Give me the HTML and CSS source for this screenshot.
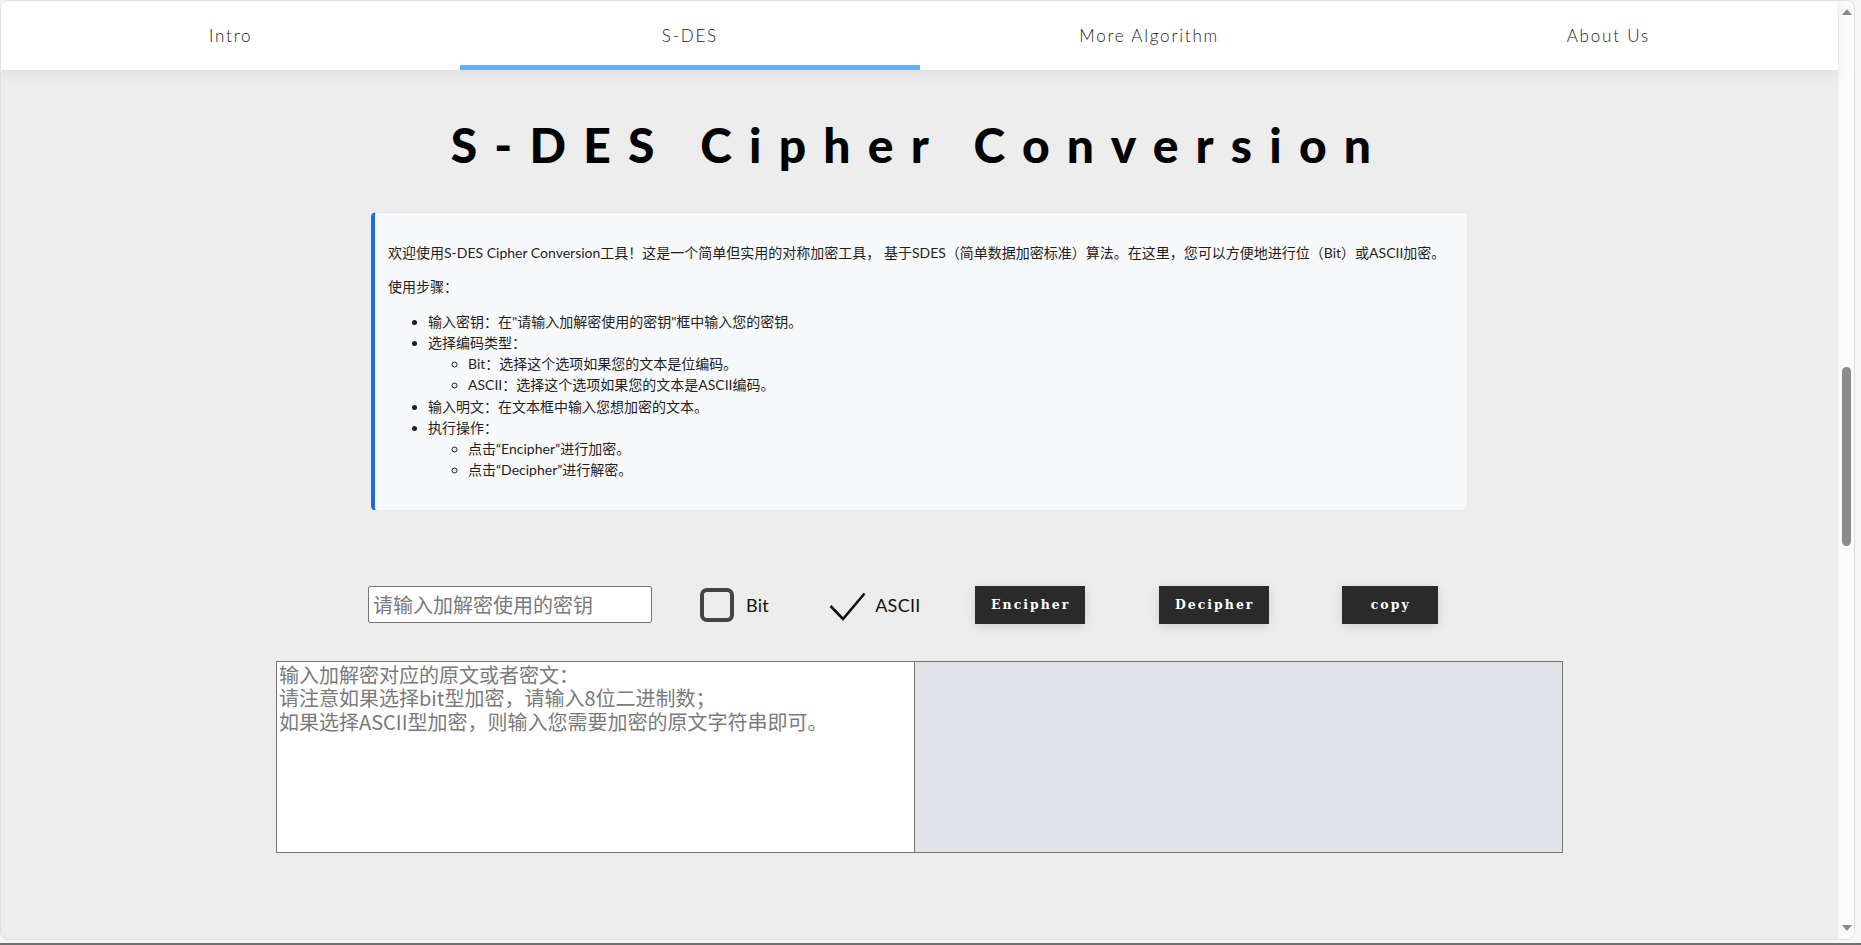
FILE: index.html
```html
<!DOCTYPE html>
<html lang="zh-CN">
<head>
<meta charset="utf-8">
<title>S-DES Cipher Conversion</title>
<link rel="stylesheet" href="styles.css">
</head>
<body>
<div class="window">
  <div class="page">
    <nav class="nav">
      <a class="tab">Intro</a>
      <a class="tab active">S-DES</a>
      <a class="tab">More Algorithm</a>
      <a class="tab">About Us</a>
    </nav>
    <main class="main">
      <h1 class="title">S-DES Cipher Conversion</h1>
      <section class="intro">
        <p>欢迎使用S-DES Cipher Conversion工具！这是一个简单但实用的对称加密工具， 基于SDES（简单数据加密标准）算法。在这里，您可以方便地进行位（Bit）或ASCII加密。</p>
        <p>使用步骤：</p>
        <ul>
          <li>输入密钥：在"请输入加解密使用的密钥"框中输入您的密钥。</li>
          <li>选择编码类型：
            <ul>
              <li>Bit：选择这个选项如果您的文本是位编码。</li>
              <li>ASCII：选择这个选项如果您的文本是ASCII编码。</li>
            </ul>
          </li>
          <li>输入明文：在文本框中输入您想加密的文本。</li>
          <li>执行操作：
            <ul>
              <li>点击“Encipher”进行加密。</li>
              <li>点击“Decipher”进行解密。</li>
            </ul>
          </li>
        </ul>
      </section>
      <div class="controls">
        <input class="key" type="text" placeholder="请输入加解密使用的密钥">
        <span class="box"></span>
        <span class="label bit-label">Bit</span>
        <svg class="check" width="37" height="29" viewBox="0 0 37 29"><path d="M1.5 14 L14 27 L35.5 1.5" fill="none" stroke="#111" stroke-width="2.6"/></svg>
        <span class="label ascii-label">ASCII</span>
        <button class="btn enc">Encipher</button>
        <button class="btn dec">Decipher</button>
        <button class="btn copy">copy</button>
      </div>
      <div class="texts">
        <textarea class="plain" placeholder="输入加解密对应的原文或者密文：&#10;请注意如果选择bit型加密，请输入8位二进制数；&#10;如果选择ASCII型加密，则输入您需要加密的原文字符串即可。"></textarea>
        <textarea class="result" readonly></textarea>
      </div>
    </main>
  </div>
  <div class="scrollbar">
    <span class="arrow up"></span>
    <span class="thumb"></span>
    <span class="arrow down"></span>
  </div>
</div>
<div class="taskbar"></div>
</body>
</html>
```

FILE: styles.css
```css
html, body {
  margin: 0;
  padding: 0;
}
body {
  height: 945px;
  overflow: hidden;
  background: #f6f6f6;
  display: flex;
  flex-direction: column;
  font-family: "Lato", "Noto Sans CJK SC", sans-serif;
  color: #222;
}
.window {
  box-sizing: border-box;
  width: 1855px;
  height: 940px;
  border: 1px solid #dedede;
  border-radius: 8px;
  overflow: hidden;
  display: flex;
}
.page {
  width: 1838px;
  background: #ededed;
  display: flex;
  flex-direction: column;
}
.nav {
  height: 69px;
  background: #fff;
  display: flex;
  box-shadow: 0 3px 14px rgba(0, 0, 0, 0.07);
  position: relative;
  z-index: 1;
}
.tab {
  flex: 1;
  box-sizing: border-box;
  display: flex;
  align-items: center;
  justify-content: center;
  font-size: 17px;
  letter-spacing: 1.8px;
  color: #222;
  font-weight: 300;
}
.tab.active {
  border-bottom: 5px solid #64b0f0;
  padding-top: 5px;
}
.main {
  display: flex;
  flex-direction: column;
}
.title {
  margin: 46px 0 0;
  text-align: center;
  font-size: 48px;
  line-height: 58px;
  font-weight: 900;
  letter-spacing: 17.2px;
  color: #000;
}
.intro {
  box-sizing: border-box;
  width: 1097px;
  margin: 38px auto 0;
  padding: 16px 13px;
  background: #f8f9fb;
  border: 1px solid #e5e7ea;
  border-left: 4px solid #1d6cd8;
  border-radius: 5px;
  font-size: 14px;
  line-height: 21.25px;
  color: #1e1e1e;
}
.intro p {
  margin: 13px 0;
}
.intro ul {
  margin: 13px 0;
  padding-left: 40px;
}
.intro ul ul {
  margin: 0;
  list-style-type: circle;
}
.controls {
  display: flex;
  align-items: center;
  margin: 75px 0 0 367px;
  height: 38px;
}
.key {
  box-sizing: border-box;
  width: 284px;
  height: 37px;
  border: 1px solid #767676;
  border-radius: 2px;
  padding: 1px 4px;
  font-family: "Noto Sans CJK SC", sans-serif;
  font-size: 20px;
  background: #fff;
  outline: none;
}
.key::placeholder {
  color: #7a7a7a;
}
.box {
  box-sizing: border-box;
  width: 34px;
  height: 34px;
  border: 4px solid #444;
  border-radius: 7px;
  margin-left: 48px;
}
.label {
  font-size: 18px;
  color: #111;
  letter-spacing: 0.3px;
}
.bit-label {
  margin-left: 12px;
}
.check {
  margin-left: 60px;
  margin-top: 4px;
}
.ascii-label {
  margin-left: 9px;
}
.btn {
  box-sizing: border-box;
  height: 38px;
  border: none;
  background: #2a2a2a;
  color: #fff;
  font-family: "DejaVu Serif", serif;
  font-weight: bold;
  font-size: 12.5px;
  letter-spacing: 2px;
  padding: 0 0 0 2px;
  box-shadow: 0 2px 10px rgba(0, 0, 0, 0.13);
}
.enc {
  width: 110px;
  margin-left: 54px;
}
.dec {
  width: 110px;
  margin-left: 74px;
}
.copy {
  width: 96px;
  margin-left: 73px;
}
.texts {
  display: flex;
  justify-content: center;
  margin-top: 37px;
}
textarea {
  box-sizing: border-box;
  height: 192px;
  border: 1px solid #767676;
  resize: none;
  outline: none;
  margin: 0;
  font-family: "Noto Sans CJK SC", sans-serif;
  font-size: 20px;
  line-height: 23.7px;
  padding: 1px 2px;
}
.plain {
  width: 639px;
  background: #fff;
}
.plain::placeholder {
  color: #7a7a7a;
}
.result {
  width: 649px;
  margin-left: -1px;
  background: #e0e3e8;
}
.scrollbar {
  width: 15px;
  background: #fbfbfb;
  border-left: 1px solid #f2f2f2;
  display: flex;
  flex-direction: column;
  align-items: center;
}
.arrow {
  width: 0;
  height: 0;
  border-left: 5px solid transparent;
  border-right: 5px solid transparent;
}
.arrow.up {
  margin-top: 8px;
  border-bottom: 6px solid #8a8a8a;
}
.arrow.down {
  margin-top: auto;
  margin-bottom: 8px;
  border-top: 6px solid #8a8a8a;
}
.thumb {
  width: 9px;
  height: 179px;
  margin-top: 352px;
  border-radius: 5px;
  background: #8c8c8c;
}
.taskbar {
  margin-top: auto;
  height: 2px;
  background: #707070;
}
```
